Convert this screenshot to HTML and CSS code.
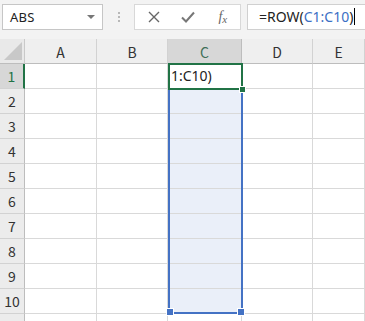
FILE: index.html
```html
<!DOCTYPE html>
<html>
<head>
<meta charset="utf-8">
<link rel="stylesheet" href="styles.css">
</head>
<body>
<div class="app">
  <div class="toolbar">
    <div class="namebox"><span class="nb-text">ABS</span><span class="nb-arrow"></span></div>
    <div class="dots"><span></span><span></span><span></span></div>
    <div class="btns">
      <span class="btn cancel"><svg width="14" height="14" viewBox="0 0 14 14"><path d="M2 2L12 12M12 2L2 12" stroke="#666" stroke-width="1.4" fill="none"/></svg></span>
      <span class="btn enter"><svg width="16" height="14" viewBox="0 0 16 14"><path d="M2 7.5L6 11.5L14 2.5" stroke="#777" stroke-width="2" fill="none"/></svg></span>
      <span class="btn fx"><i>f</i><i class="x">x</i></span>
    </div>
    <div class="formula">=ROW(<span class="ref">C1:C10</span>)<span class="caret"></span></div>
  </div>
  <div class="sheet">
    <div class="grid">
      <div class="corner"><span class="tri"></span></div>
      <div class="ch">A</div><div class="ch">B</div><div class="ch sel">C</div><div class="ch">D</div><div class="ch">E</div>
      <div class="rh act">1</div><div class="c"></div><div class="c"></div><div class="c cc"></div><div class="c"></div><div class="c"></div>
      <div class="rh">2</div><div class="c"></div><div class="c"></div><div class="c cc"></div><div class="c"></div><div class="c"></div>
      <div class="rh">3</div><div class="c"></div><div class="c"></div><div class="c cc"></div><div class="c"></div><div class="c"></div>
      <div class="rh">4</div><div class="c"></div><div class="c"></div><div class="c cc"></div><div class="c"></div><div class="c"></div>
      <div class="rh">5</div><div class="c"></div><div class="c"></div><div class="c cc"></div><div class="c"></div><div class="c"></div>
      <div class="rh">6</div><div class="c"></div><div class="c"></div><div class="c cc"></div><div class="c"></div><div class="c"></div>
      <div class="rh">7</div><div class="c"></div><div class="c"></div><div class="c cc"></div><div class="c"></div><div class="c"></div>
      <div class="rh">8</div><div class="c"></div><div class="c"></div><div class="c cc"></div><div class="c"></div><div class="c"></div>
      <div class="rh">9</div><div class="c"></div><div class="c"></div><div class="c cc"></div><div class="c"></div><div class="c"></div>
      <div class="rh">10</div><div class="c"></div><div class="c"></div><div class="c cc"></div><div class="c"></div><div class="c"></div>
      <div class="rh"></div><div class="c"></div><div class="c"></div><div class="c"></div><div class="c"></div><div class="c"></div>
    </div>
    <div class="range"><span class="h hl"></span><span class="h hr"></span></div>
    <div class="active"><span class="edit">1:C10)</span><span class="h ha"></span></div>
  </div>
</div>
</body>
</html>
```
FILE: styles.css
```css
html, body { margin: 0; padding: 0; }
body { width: 365px; height: 321px; overflow: hidden; background: #fff;
  font-family: "Noto Sans CJK JP", "Noto Sans", "Liberation Sans", sans-serif; }
.app { width: 365px; height: 321px; overflow: hidden; }
.toolbar { height: 39px; background: #f3f3f3; display: flex; align-items: flex-start; padding-top: 4px; box-sizing: border-box; position: relative; }
.namebox { margin-left: 2px; width: 101px; height: 26px; box-sizing: border-box; background: #fff; border: 1px solid #c6c6c6; display: flex; align-items: center; justify-content: space-between; padding: 0 6px 0 7px; }
.nb-text { font-family: "Noto Sans", "Liberation Sans", sans-serif; font-size: 13px; color: #222; letter-spacing: 0.2px; }
.nb-arrow { width: 0; height: 0; border-left: 4px solid transparent; border-right: 4px solid transparent; border-top: 4px solid #777; margin-right: 1px; }
.dots { width: 31px; height: 26px; display: flex; flex-direction: column; align-items: center; justify-content: center; gap: 2px; }
.dots span { width: 2px; height: 2px; background: #b8b8b8; }
.btns { width: 107px; height: 26px; box-sizing: border-box; background: #fff; border: 1px solid #d8d8d8; display: flex; align-items: center; }
.btn { display: flex; align-items: center; justify-content: center; width: 35px; height: 24px; }
.cancel { padding-left: 2px; }
.fx { font-family: "Liberation Serif", serif; color: #666; font-size: 14px; }
.fx i { font-style: italic; }
.fx .x { font-size: 11px; margin-top: 4px; }
.formula { margin-left: 6px; flex: 1; height: 26px; box-sizing: border-box; background: #fff; border: 1px solid #d0d0d0; border-right: none; padding-left: 11px; font-family: "Noto Sans", "Liberation Sans", sans-serif; font-size: 14px; line-height: 24px; color: #222; white-space: nowrap; }
.formula .ref { color: #3b6fc4; }
.caret { display: inline-block; width: 1px; height: 17px; background: #000; vertical-align: -3px; margin-left: 1px; }
.sheet { position: relative; }
.grid { display: grid; grid-template-columns: 25px 72px 71px 74px 71px 52px; grid-template-rows: 25px repeat(11, 25px); }
.corner { background: #e9e9e9; border-right: 1px solid #c9c9c9; border-bottom: 1px solid #bdbdbd; position: relative; box-sizing: border-box; }
.tri { position: absolute; right: 2px; bottom: 3px; width: 0; height: 0; border-left: 18px solid transparent; border-bottom: 18px solid #c8c8c8; }
.ch { background: #efefef; border-right: 1px solid #d2d2d2; border-bottom: 1px solid #bdbdbd; box-sizing: border-box; display: flex; align-items: center; justify-content: center; font-size: 14px; color: #333; padding-top: 1px; }
.ch.sel { background: #d7d7d7; color: #3f6f58; border-right-color: #bdbdbd; }
.rh { background: #ececec; border-right: 1px solid #bdbdbd; border-bottom: 1px solid #d2d2d2; box-sizing: border-box; display: flex; align-items: center; justify-content: center; font-size: 14px; color: #333; }
.rh.act { background: #d7d7d7; color: #217346; border-right: 2px solid #217346; }
.c { border-right: 1px solid #d9d9d9; border-bottom: 1px solid #d9d9d9; box-sizing: border-box; }
.cc { background: #eaeff9; }
.range { position: absolute; left: 168px; top: 49px; width: 75px; height: 226px; box-sizing: border-box; border: 2px solid #4472c4; border-top: none; }
.active { position: absolute; left: 168px; top: 24px; width: 75px; height: 27px; box-sizing: border-box; border: 2px solid #217346; background: #fff; overflow: hidden; }
.edit { position: absolute; left: 1px; top: 0; font-family: "Noto Sans", "Liberation Sans", sans-serif; font-size: 14px; line-height: 22px; color: #222; }
.h { position: absolute; width: 6px; height: 6px; background: #4472c4; border: 1px solid #fff; box-sizing: content-box; }
.hl { left: -4px; bottom: -4px; }
.hr { right: -4px; bottom: -4px; }
.active .ha { display: none; }
.sheet::after { content: ""; position: absolute; left: 239px; top: 47px; width: 5px; height: 5px; background: #217346; border: 1px solid #fff; }
```
